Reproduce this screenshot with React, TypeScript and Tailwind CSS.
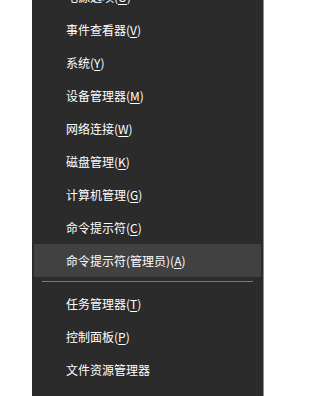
type Item = { label: string; key?: string; suffix?: string; active?: boolean }

const top: Item[] = [
  { label: "电源选项(", key: "O", suffix: ")" },
  { label: "事件查看器(", key: "V", suffix: ")" },
  { label: "系统(", key: "Y", suffix: ")" },
  { label: "设备管理器(", key: "M", suffix: ")" },
  { label: "网络连接(", key: "W", suffix: ")" },
  { label: "磁盘管理(", key: "K", suffix: ")" },
  { label: "计算机管理(", key: "G", suffix: ")" },
  { label: "命令提示符(", key: "C", suffix: ")" },
  { label: "命令提示符(管理员)(", key: "A", suffix: ")", active: true },
]

const bottom: Item[] = [
  { label: "任务管理器(", key: "T", suffix: ")" },
  { label: "控制面板(", key: "P", suffix: ")" },
  { label: "文件资源管理器" },
]

function Row({ item }: { item: Item }) {
  return (
    <div
      className={
        "h-[33px] flex items-center pl-[32px] text-[12px] text-white whitespace-nowrap " +
        (item.active ? "bg-[#414141]" : "")
      }
    >
      <span>
        {item.label}
        {item.key && <span className="underline underline-offset-[2px]">{item.key}</span>}
        {item.suffix}
      </span>
    </div>
  )
}

export default function App() {
  return (
    <div
      className="w-[318px] h-[396px] bg-white overflow-hidden flex"
      style={{ fontFamily: '"Noto Sans CJK SC", "Liberation Sans", sans-serif' }}
    >
      <div className="ml-[32px] w-[232px] h-full bg-[#2b2b2b] border-r border-[#8f8f8f] px-[2px]">
        <div className="-mt-[20px]">
          {top.map((item, i) => (
            <Row key={i} item={item} />
          ))}
          <div className="pt-[4px] pb-[5px] px-[8px]">
            <div className="h-px bg-[#7a7a7a]"></div>
          </div>
          {bottom.map((item, i) => (
            <Row key={i} item={item} />
          ))}
        </div>
      </div>
    </div>
  )
}
